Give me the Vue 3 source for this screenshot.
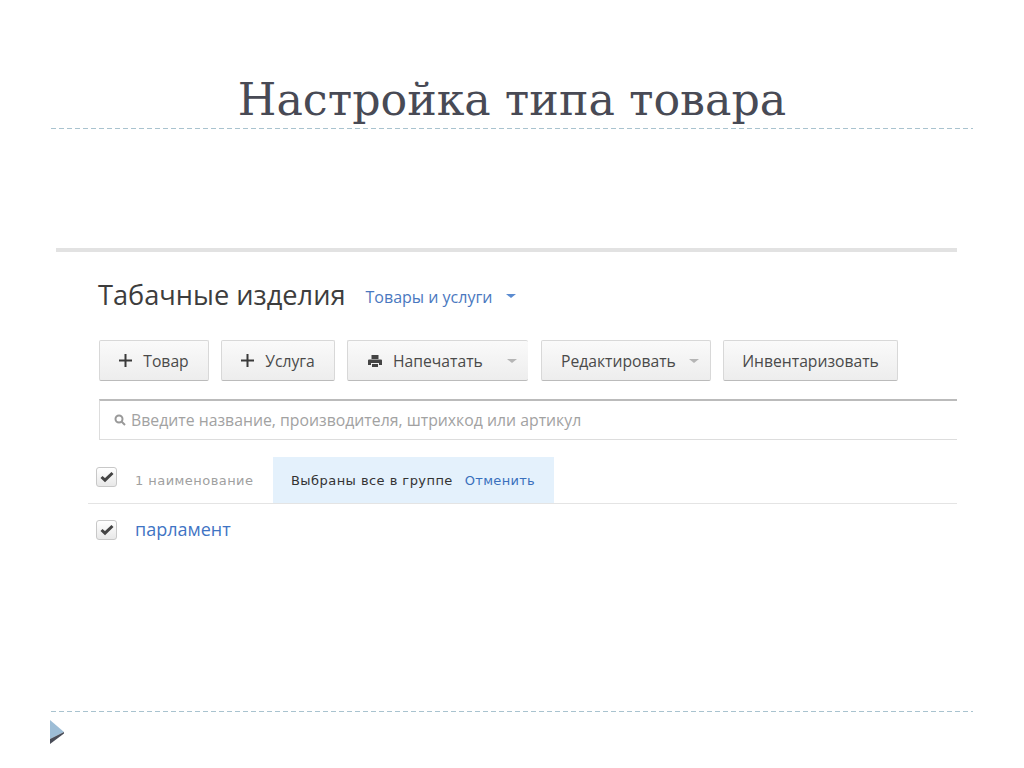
<script setup>
const buttons = [
  { label: 'Товар', plus: true, cls: 'b1' },
  { label: 'Услуга', plus: true, cls: 'b2' },
  { label: 'Напечатать', print: true, caret: true, cls: 'b3' },
  { label: 'Редактировать', caret: true, cls: 'b4' },
  { label: 'Инвентаризовать', cls: 'b5' }
]
</script>

<template>
  <div class="slide">
    <h1 class="title">Настройка типа товара</h1>
    <div class="dash"></div>
    <section class="shot">
      <div class="head">
        <span class="name">Табачные изделия</span>
        <span class="type">Товары и услуги</span>
        <span class="caret blue"></span>
      </div>
      <div class="toolbar">
        <div v-for="b in buttons" :key="b.label" class="btn" :class="b.cls">
          <svg v-if="b.plus" class="plus" viewBox="0 0 13 13" width="13" height="13">
            <path d="M5.500 0h2v5.500H13v2H7.500V13h-2V7.500H0v-2h5.500z" fill="#3a3a3a" />
          </svg>
          <svg v-if="b.print" class="printer" viewBox="0 0 14 12" width="14" height="12">
            <path d="M3.500 0h7v4h-7zM1 4.500h12a1 1 0 0 1 1 1V10h-3V8H3v2H0V5.500a1 1 0 0 1 1-1zM4 9h6v3H4z" fill="#444" />
          </svg>
          <span>{{ b.label }}</span>
          <span v-if="b.caret" class="caret grey"></span>
        </div>
      </div>
      <div class="search">
        <svg class="lens" viewBox="0 0 12 12" width="12" height="12">
          <circle cx="5" cy="5" r="3.500" fill="none" stroke="#999" stroke-width="2" />
          <path d="M7.500 7.500L11 11" stroke="#999" stroke-width="2" />
        </svg>
        <span>Введите название, производителя, штрихкод или артикул</span>
      </div>
      <div class="list-head">
        <span class="check"><svg viewBox="0 0 14 12" width="14" height="12"><path d="M1.500 6l3.500 3.200L12.500 2" fill="none" stroke="#444" stroke-width="3" /></svg></span>
        <span class="count">1 наименование</span>
        <div class="selected">
          <span class="sel-text">Выбраны все в группе</span>
          <span class="cancel">Отменить</span>
        </div>
      </div>
      <div class="row">
        <span class="check"><svg viewBox="0 0 14 12" width="14" height="12"><path d="M1.500 6l3.500 3.200L12.500 2" fill="none" stroke="#444" stroke-width="3" /></svg></span>
        <span class="item">парламент</span>
      </div>
    </section>
    <div class="spacer"></div>
    <div class="dash"></div>
    <svg class="arrow" viewBox="0 0 14 24" width="14" height="24">
      <path d="M0 0L14 12L0 19z" fill="#9dbdd6" />
      <path d="M0 19L14 12V13.500L0 24z" fill="#4a4d58" />
    </svg>
  </div>
</template>

<style>
html, body { margin: 0; background: #fff; }
</style>

<style scoped>
.slide {
  width: 1024px;
  height: 768px;
  box-sizing: border-box;
  padding: 0 51px;
  display: flex;
  flex-direction: column;
  overflow: hidden;
  background: #fff;
}
.title {
  margin: 71px 0 0;
  font: 400 44.300px/57px "DejaVu Serif", serif;
  color: #484a55;
  text-align: center;
  white-space: nowrap;
}
.dash {
  flex: none;
  height: 1px;
  background: repeating-linear-gradient(90deg, #a9c3cf 0 5px, transparent 5px 8px);
}
.shot {
  margin: 119px 16px 0 5px;
  border-top: 4px solid #e2e2e2;
  font-family: "Open Sans", sans-serif;
  padding-left: 32px;
}
.head {
  display: flex;
  align-items: center;
  height: 32px;
  margin-top: 26px;
  margin-left: 10px;
}
.name { font-size: 27.200px; color: #3d3d3d; }
.type { font-size: 16px; color: #4a78c0; margin-left: 20px; margin-top: 5px; }
.caret {
  width: 0;
  height: 0;
  border-left: 5px solid transparent;
  border-right: 5px solid transparent;
  border-top: 4px solid #999;
}
.caret.blue { border-top-color: #5b8bd0; margin-left: 13px; margin-top: 3px; }
.caret.grey { border-top-color: #b5b5b5; }
.toolbar {
  display: flex;
  margin-top: 30px;
  margin-left: 11px;
  gap: 12px;
}
.btn {
  height: 41px;
  box-sizing: border-box;
  display: flex;
  align-items: center;
  background: linear-gradient(#fafafa, #ededed);
  border: 1px solid #d8d8d8;
  border-bottom-color: #bbb;
  border-radius: 2px;
  font-size: 15.700px;
  color: #4a4a4a;
  justify-content: center;
  gap: 11px;
}
.b1 { width: 110px; }
.b2 { width: 114px; }
.b3 { width: 181px; border-right: 0; justify-content: flex-start; padding-left: 20px; }
.b3 .caret { margin-left: 13px; }
.b4 { width: 170px; gap: 13px; margin-left: 1px; justify-content: flex-start; padding-left: 19px; }
.b5 { width: 175px; }
.search {
  margin-top: 18px;
  margin-left: 11px;
  height: 41px;
  box-sizing: border-box;
  border: 1px solid #ddd;
  border-top: 2px solid #bbb;
  border-right: 0;
  display: flex;
  align-items: center;
  padding-left: 14px;
  gap: 5px;
  font-size: 15.800px;
  color: #a2a2a2;
}
.list-head {
  display: flex;
  align-items: center;
  height: 46px;
  margin-top: 17px;
  border-bottom: 1px solid #e4e4e4;
}
.check {
  flex: none;
  width: 21px;
  height: 20px;
  box-sizing: border-box;
  display: flex;
  align-items: center;
  justify-content: center;
  border: 1px solid #c8c8c8;
  border-radius: 3px;
  background: linear-gradient(#fff, #e8e8e8);
  margin-left: 8px;
}
.list-head .check { margin-top: -6px; }
.count {
  font-family: "DejaVu Sans", sans-serif;
  font-size: 13px;
  letter-spacing: 0.450px;
  color: #a0a0a0;
  margin-left: 18px;
  margin-top: 1px;
  width: 138px;
  white-space: nowrap;
}
.selected {
  align-self: stretch;
  display: flex;
  align-items: center;
  background: #e4f1fc;
  width: 281px;
  box-sizing: border-box;
  padding-left: 18px;
  font-family: "DejaVu Sans", sans-serif;
  font-size: 13px;
  letter-spacing: 0.450px;
  white-space: nowrap;
}
.sel-text { color: #333; }
.cancel { color: #3a70bd; margin-left: 12px; letter-spacing: 0.300px; }
.row {
  display: flex;
  align-items: center;
  height: 50px;
}
.row .check { margin-top: 2px; }
.item { font-size: 18px; color: #3f74c4; margin-left: 18px; }
.spacer { flex: 1; }
.arrow { flex: none; margin-top: 8px; margin-bottom: 24px; margin-left: -1px; }
</style>
